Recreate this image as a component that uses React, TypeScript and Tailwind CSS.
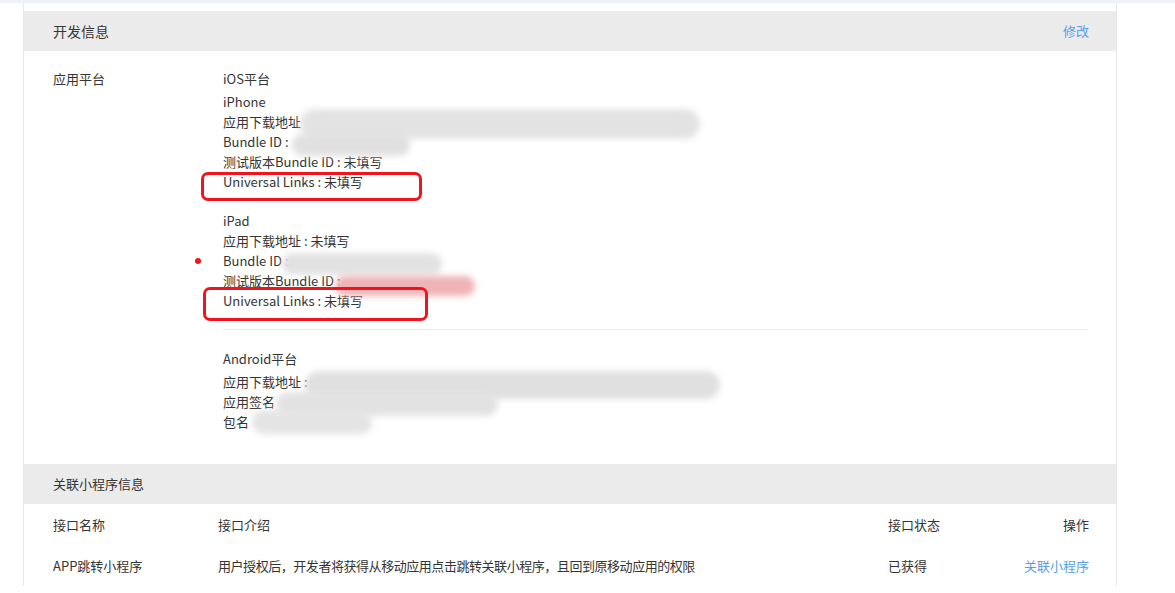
import React from "react";

const font = { fontFamily: '"Noto Sans CJK SC", "Noto Sans", sans-serif' };

function Line({ children, className = "" }: { children: React.ReactNode; className?: string }) {
  return <div className={`h-[20px] whitespace-nowrap leading-[20px] ${className}`}>{children}</div>;
}

function Blob({ className }: { className: string }) {
  return <div className={`pointer-events-none absolute rounded-full blur-[3px] ${className}`} />;
}

export default function App() {
  return (
    <div className="relative min-h-screen bg-white text-[13px] text-[#353535]" style={font}>
      <div className="h-[3px] bg-[#eef1f5]" />
      <div className="ml-[23px] w-[1094px] border-x border-[#e8e8e8] pt-[8px]">
        {/* 开发信息 */}
        <div className="flex h-[40px] items-center justify-between bg-[#ebebeb] pl-[29px] pr-[27px]">
          <span className="text-[14px]">开发信息</span>
          <span className="text-[#5a9ee6]">修改</span>
        </div>
        <div className="flex pb-[32px] pl-[29px] pr-[28px] pt-[18px]">
          <div className="w-[170px] shrink-0 leading-[20px]">应用平台</div>
          <div className="flex-1">
            <Line className="mb-[3px]">iOS平台</Line>
            <Line>iPhone</Line>
            <Line>应用下载地址</Line>
            <Line>Bundle ID :</Line>
            <Line>测试版本Bundle ID : 未填写</Line>
            <Line>Universal Links : 未填写</Line>
            <Line className="mt-[19px]">iPad</Line>
            <Line>应用下载地址 : 未填写</Line>
            <Line>Bundle ID :</Line>
            <Line>测试版本Bundle ID :</Line>
            <Line>Universal Links : 未填写</Line>
            <div className="mt-[18px] h-px bg-[#ececec]" />
            <Line className="mb-[3px] mt-[19px]">Android平台</Line>
            <Line>应用下载地址 :</Line>
            <Line>应用签名</Line>
            <Line>包名</Line>
          </div>
        </div>

        {/* 关联小程序信息 */}
        <div className="flex h-[40px] items-center bg-[#ebebeb] pl-[29px]">
          <span>关联小程序信息</span>
        </div>
        <div className="pl-[29px] pr-[27px]">
          <div className="flex h-[41px] items-center">
            <div className="w-[165px] shrink-0">接口名称</div>
            <div className="flex-1">接口介绍</div>
            <div className="w-[101px] shrink-0">接口状态</div>
            <div className="w-[100px] shrink-0 text-right">操作</div>
          </div>
          <div className="flex h-[41px] items-center">
            <div className="w-[165px] shrink-0">APP跳转小程序</div>
            <div className="flex-1 tracking-[-0.45px]">用户授权后，开发者将获得从移动应用点击跳转关联小程序，且回到原移动应用的权限</div>
            <div className="w-[101px] shrink-0">已获得</div>
            <div className="w-[100px] shrink-0 whitespace-nowrap text-right text-[#5a9ee6]">关联小程序</div>
          </div>
        </div>
      </div>

      {/* masked regions */}
      <Blob className="left-[300px] top-[109px] h-[30px] w-[400px] bg-[#e3e3e3]" />
      <Blob className="left-[292px] top-[134px] h-[22px] w-[118px] bg-[#e0e0e0]" />
      <Blob className="left-[282px] top-[253px] h-[22px] w-[160px] bg-[#e2e2e2]" />
      <Blob className="left-[335px] top-[276px] h-[20px] w-[140px] bg-[#efb3b5]" />
      <Blob className="left-[305px] top-[371px] h-[28px] w-[415px] bg-[#e0e0e0]" />
      <Blob className="left-[276px] top-[392px] h-[24px] w-[222px] bg-[#e2e2e2]" />
      <Blob className="left-[252px] top-[410px] h-[24px] w-[120px] bg-[#e4e4e4]" />

      {/* annotations */}
      <div className="pointer-events-none absolute left-[201px] top-[172px] h-[29px] w-[221px] rounded-[7px] border-[3px] border-[#f0141e]" />
      <div className="pointer-events-none absolute left-[203px] top-[287px] h-[34px] w-[225px] rounded-[7px] border-[3px] border-[#f0141e]" />
      <div className="pointer-events-none absolute left-[195px] top-[258px] h-[6px] w-[6px] rounded-full bg-[#f0141e]" />
    </div>
  );
}
